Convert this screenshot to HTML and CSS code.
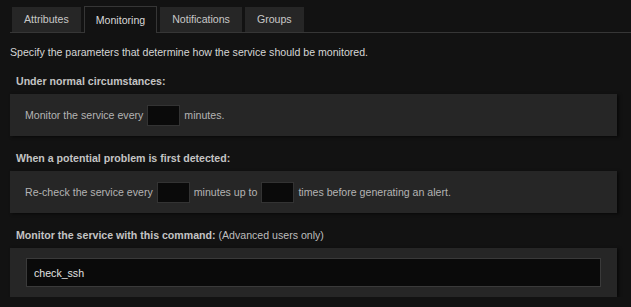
FILE: index.html
```html
<!DOCTYPE html>
<html>
<head>
<meta charset="utf-8">
<link rel="stylesheet" href="styles.css">
</head>
<body>
<div class="page">
  <div class="tabs">
    <div class="tab">Attributes</div>
    <div class="tab active">Monitoring</div>
    <div class="tab">Notifications</div>
    <div class="tab">Groups</div>
  </div>
  <div class="content">
    <p class="desc">Specify the parameters that determine how the service should be monitored.</p>

    <h3 class="heading">Under normal circumstances:</h3>
    <div class="panel">
      <span>Monitor the service every</span>
      <input class="num" type="text">
      <span>minutes.</span>
    </div>

    <h3 class="heading">When a potential problem is first detected:</h3>
    <div class="panel">
      <span>Re-check the service every</span>
      <input class="num" type="text">
      <span>minutes up to</span>
      <input class="num" type="text">
      <span>times before generating an alert.</span>
    </div>

    <h3 class="heading">Monitor the service with this command: <span class="note">(Advanced users only)</span></h3>
    <div class="panel wide">
      <input class="cmd" type="text" value="check_ssh">
    </div>
  </div>
</div>
</body>
</html>
```
FILE: styles.css
```css
html, body {
  margin: 0;
  padding: 0;
  background: #121212;
}
body {
  font-family: "Liberation Sans", Arial, sans-serif;
  font-size: 10.6px;
  line-height: 13px;
  color: #d4d4d4;
}
.page {
  padding: 6px 0 0 10px;
}
.tabs {
  display: flex;
  align-items: flex-end;
  gap: 3px;
  padding-left: 2px;
  height: 26px;
  border-bottom: 1px solid #363636;
}
.tab {
  height: 25px;
  line-height: 25px;
  padding: 0 12px;
  background: #262626;
  color: #c8c8c8;
  box-sizing: border-box;
}
.tab.active {
  height: 27px;
  line-height: 26px;
  margin-bottom: -1px;
  background: #121212;
  border: 1px solid #363636;
  border-bottom: none;
  padding: 0 11px;
  color: #d8d8d8;
}
.content {
  margin-right: 14px;
}
.desc {
  margin: 13px 0 0 0;
  color: #d6d6d6;
}
.heading {
  margin: 16px 0 6px 6px;
  font-size: 10.6px;
  line-height: 13px;
  font-weight: bold;
  color: #c4c4c4;
}
.note {
  font-weight: normal;
  color: #bdbdbd;
}
.panel {
  display: flex;
  align-items: center;
  gap: 4px;
  height: 42px;
  padding: 0 15px;
  background: #262626;
  color: #b4b4b4;
  box-shadow: 2px 1px 3px rgba(0, 0, 0, 0.55);
}
.num {
  width: 33px;
  height: 21px;
  box-sizing: border-box;
  margin: 0;
  padding: 0 3px;
  background: #0a0a0a;
  border: 1px solid #333;
  color: #ddd;
  font: inherit;
  outline: none;
}
.panel.wide {
  height: 49px;
  padding: 0 16px;
}
.cmd {
  flex: 1;
  height: 29px;
  box-sizing: border-box;
  margin: 0;
  padding: 0 7px;
  background: #0a0a0a;
  border: 1px solid #3a3a3a;
  color: #e2e2e2;
  font: inherit;
  outline: none;
}
```
